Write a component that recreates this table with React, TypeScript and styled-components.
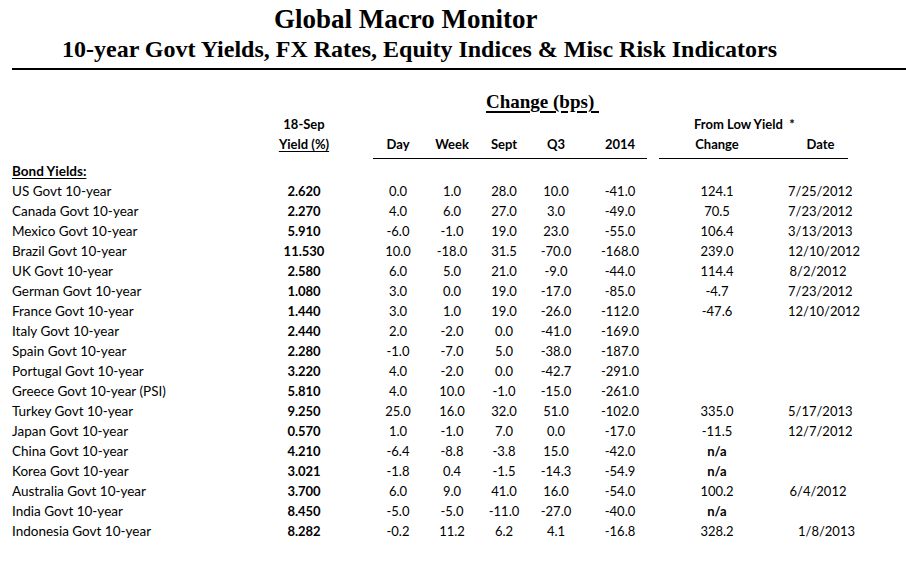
import React from 'react';
import styled, {createGlobalStyle} from "styled-components";

type Row = {
    name: string;
    yld: string;
    ch: string[];
    low?: string;
    date?: string;
    nudge?: number;
};

const rows: Row[] = [
    {name: "US Govt 10-year", yld: "2.620", ch: ["0.0", "1.0", "28.0", "10.0", "-41.0"], low: "124.1", date: "7/25/2012"},
    {name: "Canada Govt 10-year", yld: "2.270", ch: ["4.0", "6.0", "27.0", "3.0", "-49.0"], low: "70.5", date: "7/23/2012"},
    {name: "Mexico Govt 10-year", yld: "5.910", ch: ["-6.0", "-1.0", "19.0", "23.0", "-55.0"], low: "106.4", date: "3/13/2013"},
    {name: "Brazil Govt 10-year", yld: "11.530", ch: ["10.0", "-18.0", "31.5", "-70.0", "-168.0"], low: "239.0", date: "12/10/2012"},
    {name: "UK Govt 10-year", yld: "2.580", ch: ["6.0", "5.0", "21.0", "-9.0", "-44.0"], low: "114.4", date: "8/2/2012"},
    {name: "German Govt 10-year", yld: "1.080", ch: ["3.0", "0.0", "19.0", "-17.0", "-85.0"], low: "-4.7", date: "7/23/2012"},
    {name: "France Govt 10-year", yld: "1.440", ch: ["3.0", "1.0", "19.0", "-26.0", "-112.0"], low: "-47.6", date: "12/10/2012"},
    {name: "Italy Govt 10-year", yld: "2.440", ch: ["2.0", "-2.0", "0.0", "-41.0", "-169.0"]},
    {name: "Spain Govt 10-year", yld: "2.280", ch: ["-1.0", "-7.0", "5.0", "-38.0", "-187.0"]},
    {name: "Portugal Govt 10-year", yld: "3.220", ch: ["4.0", "-2.0", "0.0", "-42.7", "-291.0"]},
    {name: "Greece Govt 10-year (PSI)", yld: "5.810", ch: ["4.0", "10.0", "-1.0", "-15.0", "-261.0"]},
    {name: "Turkey Govt 10-year", yld: "9.250", ch: ["25.0", "16.0", "32.0", "51.0", "-102.0"], low: "335.0", date: "5/17/2013"},
    {name: "Japan Govt 10-year", yld: "0.570", ch: ["1.0", "-1.0", "7.0", "0.0", "-17.0"], low: "-11.5", date: "12/7/2012"},
    {name: "China Govt 10-year", yld: "4.210", ch: ["-6.4", "-8.8", "-3.8", "15.0", "-42.0"], low: "n/a"},
    {name: "Korea Govt 10-year", yld: "3.021", ch: ["-1.8", "0.4", "-1.5", "-14.3", "-54.9"], low: "n/a"},
    {name: "Australia Govt 10-year", yld: "3.700", ch: ["6.0", "9.0", "41.0", "16.0", "-54.0"], low: "100.2", date: "6/4/2012"},
    {name: "India Govt 10-year", yld: "8.450", ch: ["-5.0", "-5.0", "-11.0", "-27.0", "-40.0"], low: "n/a"},
    {name: "Indonesia Govt 10-year", yld: "8.282", ch: ["-0.2", "11.2", "6.2", "4.1", "-16.8"], low: "328.2", date: "1/8/2013", nudge: 10},
];

const periods = ["Day", "Week", "Sept", "Q3", "2014"];

export default function App() {
    return (
        <Page>
            <GlobalStyle/>
            <Title>Global Macro Monitor</Title>
            <Subtitle>10-year Govt Yields, FX Rates, Equity Indices &amp; Misc Risk Indicators</Subtitle>
            <Rule/>
            <Sheet>
                <ChangeTitle>Change (bps)&nbsp;</ChangeTitle>

                <Cell $bold $col={2}>18-Sep</Cell>
                <FromLow>From Low Yield  *</FromLow>

                <Cell $bold $col={2} $underline $head>Yield (%)</Cell>
                {periods.map((p, i) => (
                    <Cell key={p} $bold $head $ruled $col={4 + i} $shift={i === 4 ? 8 : 0}>{p}</Cell>
                ))}
                <Cell $bold $head $ruled $col={10}>Change</Cell>
                <Cell $bold $head $ruled $col={11} $shift={18}>Date</Cell>

                <Section>Bond Yields:</Section>

                {rows.map((r) => (
                    <React.Fragment key={r.name}>
                        <Label>{r.name}</Label>
                        <Cell $bold $col={2}>{r.yld}</Cell>
                        {r.ch.map((v, i) => (
                            <Cell key={i} $col={4 + i} $shift={i === 4 ? 8 : 0}>{v}</Cell>
                        ))}
                        <Cell $col={10} $bold={r.low === "n/a"}>{r.low ?? ""}</Cell>
                        <Cell $col={11} $shift={13 + (r.nudge ?? 0)}>{r.date ?? ""}</Cell>
                    </React.Fragment>
                ))}
            </Sheet>
        </Page>
    );
}

const GlobalStyle = createGlobalStyle`
  body {
    margin: 0;
    background: #ffffff;
    color: #000000;
  }
`

const Page = styled.div`
  width: 906px;
  height: 580px;
  overflow: hidden;
  padding-top: 4px;
  box-sizing: border-box;
`

const Title = styled.div`
  font-family: "Liberation Serif", "Times New Roman", serif;
  font-weight: bold;
  font-size: 27px;
  line-height: 30px;
  padding-left: 274px;
  white-space: nowrap;
`

const Subtitle = styled.div`
  font-family: "Liberation Serif", "Times New Roman", serif;
  font-weight: bold;
  font-size: 24px;
  line-height: 26px;
  margin-top: 2px;
  padding-left: 62px;
  white-space: nowrap;
`

const Rule = styled.div`
  margin: 6px 0 0 12px;
  height: 2px;
  background: #000000;
`

const Sheet = styled.div`
  display: grid;
  grid-template-columns: 252px 80px 29px 50px 58px 46px 58px 62px 12px 116px 73px;
  margin: 21px 0 0 12px;
  font-family: Lato, "Open Sans", sans-serif;
  font-size: 13px;
  line-height: 20px;
`

const ChangeTitle = styled.div`
  grid-column: 4 / 10;
  padding-left: 113px;
  margin-bottom: 1px;
  font-family: "Liberation Serif", "Times New Roman", serif;
  font-weight: bold;
  font-size: 19px;
  line-height: 22px;
  text-decoration: underline;
  text-decoration-thickness: 2px;
  text-underline-offset: 3px;
  white-space: pre;
`

const FromLow = styled.div`
  grid-column: 10 / 12;
  padding-left: 35px;
  font-weight: bold;
  white-space: pre;
`

const Cell = styled.div<{ $col: number; $bold?: boolean; $head?: boolean; $ruled?: boolean; $underline?: boolean; $shift?: number }>`
  grid-column: ${p => p.$col};
  padding-left: ${p => p.$shift ?? 0}px;
  text-align: center;
  white-space: nowrap;
  font-weight: ${p => p.$bold ? 700 : 400};
  padding-bottom: ${p => p.$head ? "4px" : "0"};
  border-bottom: ${p => p.$ruled ? "1px solid #000" : "none"};
  margin-bottom: ${p => p.$head ? "2px" : "0"};
  text-decoration: ${p => p.$underline ? "underline" : "none"};
  text-underline-offset: 2px;
`

const Section = styled.div`
  grid-column: 1 / -1;
  font-size: 13.5px;
  font-weight: bold;
  text-decoration: underline;
  text-underline-offset: 2px;
`

const Label = styled.div`
  grid-column: 1;
  font-size: 13.5px;
  white-space: nowrap;
`
